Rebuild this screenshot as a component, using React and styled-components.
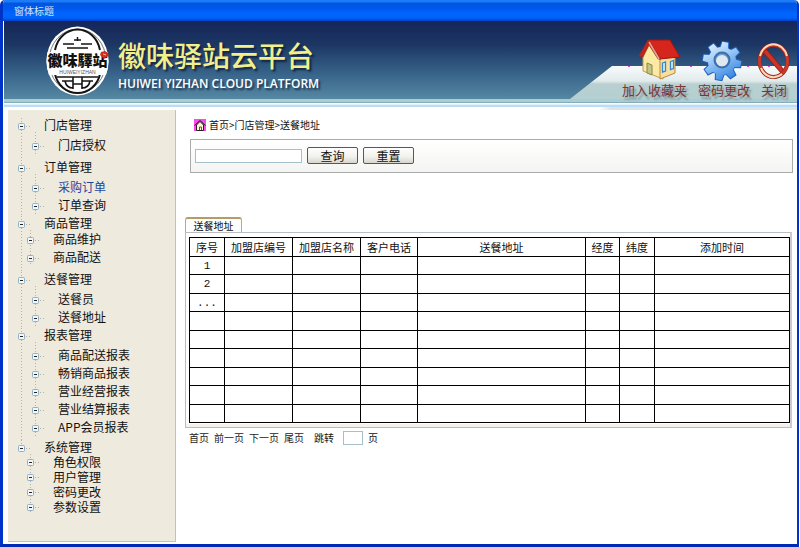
import React from "react";
import styled, { createGlobalStyle, css } from "styled-components";

const GlobalStyle = createGlobalStyle`
  *, *::before, *::after { box-sizing: border-box; }
  body {
    margin: 0;
    background: #fff;
    color: #111;
    font-family: "Noto Sans CJK SC", sans-serif;
    font-size: 12px;
  }
  button, input { font-family: inherit; margin: 0; padding: 0; }
  ul { list-style: none; margin: 0; padding: 0; }
`;

const Window = styled.div`
  display: flex;
  flex-direction: column;
  min-height: 100vh;
  margin-right: 1px;
  border: solid #0034c8;
  border-width: 0 2px 3px 3px;
  border-bottom-color: #0029b8;
  border-radius: 5px 5px 0 0;
  overflow: hidden;
`;

const TitleBar = styled.div`
  height: 21px;
  margin: 0 -3px;
  padding-left: 14px;
  line-height: 22px;
  font-size: 10px;
  color: #d6e2f0;
  background: linear-gradient(#1c7cf8 0 2px, #0054e0 3px, #0058ec 8px, #0066ff 14px, #0062fa 18px, #0040c8 21px);
`;

const Header = styled.header`
  display: flex;
  justify-content: space-between;
  height: 78px;
  margin-left: 1px;
  background: linear-gradient(#15265a, #1c3663 30%, #38648a 68%, #5588a2);
`;

const Brand = styled.div`
  display: flex;
  align-items: flex-start;
  gap: 9px;
  padding: 5px 0 0 42px;
`;

const BrandText = styled.div`
  padding-top: 13px;
  white-space: nowrap;
`;

const BrandName = styled.h1`
  margin: 0;
  font-size: 28px;
  line-height: 32px;
  font-weight: 500;
  color: #f3ef8b;
  text-shadow: 2px 2px 2px #14233f;
`;

const BrandLatin = styled.p`
  margin: 0;
  padding-top: 5px;
  font: 600 12px/16px "Open Sans", "Noto Sans", sans-serif;
  color: #fff;
  text-shadow: 2px 2px 2px #1c2f4a;
`;

const QuickNav = styled.nav`
  position: relative;
  display: flex;
  align-items: flex-end;
  gap: 11px;
  padding: 0 10px 0 52px;
  &::before {
    content: "";
    position: absolute;
    inset: 45px 0 0 0;
    background: linear-gradient(#f8fbfb, #e2ebec 45%, #b9cfd1 55%, #b4d0d2);
    clip-path: polygon(42px 0, 100% 0, 100% 100%, 0 100%);
  }
`;

const QuickButton = styled.button`
  position: relative;
  display: flex;
  flex-direction: column;
  align-items: center;
  border: 0;
  background: none;
  font-size: 13px;
  line-height: 18px;
  color: #7c3434;
  text-shadow: 2px 3px 2px #7c8a8e;
  svg { display: block; overflow: visible; }
`;

const HeaderEdge = styled.div`
  flex: none;
  height: 11px;
  margin-left: 1px;
  background:
    linear-gradient(90deg, #fff, #dde5e9 12px) right 8px / 198px 3px no-repeat,
    linear-gradient(#a9cdd3 0 3px, #85adb7 3px 4px, #fff 4px 5px, #e5f1f9 5px 6px, #b8dcfa 6px 8px, #fff 8px);
`;

const Body = styled.div`
  display: flex;
  flex: 1;
  align-items: stretch;
  gap: 9px;
  padding: 0 4px 2px 5px;
`;

const Sidebar = styled.nav`
  flex: none;
  width: 168px;
  padding: 8px 0 16px 10px;
  background: #eeeade;
  border: solid #c5c2b4;
  border-width: 0 1px 1px 0;
`;

const dots = (x) => css`
  background: repeating-linear-gradient(#b5b2a8 0 1px, transparent 1px 3px) ${x}px 0 / 1px 100% no-repeat;
`;

const Group = styled.li`
  padding-bottom: ${(p) => p.$after}px;
  ${dots(3)}
  &:last-child { background-size: 1px 7px; }
`;

const TreeButton = styled.button`
  display: flex;
  align-items: center;
  height: ${(p) => p.$height}px;
  border: 0;
  background: none;
  font-size: 12px;
  line-height: 14px;
  white-space: nowrap;
  color: ${(p) => (p.$active ? "#1a479c" : "#111")};
  svg { margin: 2px 14px 0 0; }
`;

const Children = styled.ul`
  margin-left: ${(p) => (p.$compact ? 9 : 14)}px;
  padding-top: ${(p) => (p.$compact ? 0 : 4)}px;
  ${dots(3)}
`;

const Main = styled.main`
  flex: 1;
  min-width: 0;
`;

const Breadcrumb = styled.div`
  display: flex;
  align-items: center;
  gap: 3px;
  height: 29px;
  padding-left: 9px;
  font-size: 10px;
`;

const SearchBar = styled.form`
  display: flex;
  align-items: flex-start;
  gap: 5px;
  height: 34px;
  margin-left: 5px;
  padding: 7px 4px;
  border: 1px solid #a9acab;
  background: linear-gradient(#fff, #f4f4f2);
`;

const TextBox = styled.input`
  width: ${(p) => p.$width}px;
  height: 14px;
  border: 1px solid #a5c0cc;
  background: #fff;
  font-size: 10px;
`;

const SearchBox = styled(TextBox)`
  margin: 2px 0 0;
`;

const PushButton = styled.button`
  width: 51px;
  height: 17px;
  border: 1px solid #3c607c;
  border-radius: 2px;
  background: linear-gradient(#fff, #f0f0ec 60%, #d8d5cd);
  font-size: 12px;
  line-height: 13px;
  color: #111;
`;

const TabButton = styled.button`
  display: block;
  width: 57px;
  height: 15px;
  margin-top: 44px;
  border: solid #a4aeb2;
  border-width: 2px 1px 0;
  border-top-color: #b59b66;
  border-radius: 3px 3px 0 0;
  background: #fdfdfb;
  font-size: 10px;
  line-height: 12px;
  color: #111;
`;

const Panel = styled.section`
  margin-right: 1px;
  padding: 4px 0 4px 3px;
  border: 1px solid #b8bdc2;
  border-right: 2px solid #c9cbd1;
  background: #fff;
  box-shadow: inset 0 -3px 0 #f5f1ec;
`;

const Table = styled.table`
  width: 100%;
  height: 186px;
  table-layout: fixed;
  border-collapse: collapse;
  background: #fff;
  font-size: 11px;
  line-height: 14px;
  text-align: center;
  th, td {
    padding: 0;
    border: 1px solid #000;
    font-weight: normal;
    white-space: nowrap;
  }
  th { height: 19px; }
  td { height: 18px; font-family: "Liberation Mono", monospace; }
`;

const Col = styled.col`
  width: ${(p) => p.$width}%;
`;

const Pager = styled.nav`
  display: flex;
  align-items: center;
  gap: 5px;
  padding: 3px 0 0 4px;
  font-size: 10px;
  line-height: 14px;
`;

const PageLink = styled.a`
  color: #222;
  text-decoration: none;
`;

const JumpLabel = styled.label`
  display: flex;
  align-items: center;
  gap: 9px;
  margin-left: 5px;
`;

function NodeBox() {
  return (
    <svg width="12" height="7" viewBox="0 0 12 7" overflow="visible" aria-hidden="true">
      <rect x="0.5" y="0.5" width="6" height="6" rx="1" fill="#f3f6f6" stroke="#8eb0ca" />
      <path d="M2 3.5h3" stroke="#222" />
      <path d="M8 3.5h1M11 3.5h1" stroke="#b5b2a8" />
    </svg>
  );
}

function Logo() {
  return (
    <svg width="63" height="70" viewBox="0 0 63 70" role="img" aria-label="徽味驛站">
      <defs>
        <clipPath id="seal">
          <ellipse cx="31.5" cy="35" rx="31" ry="34.5" />
        </clipPath>
      </defs>
      <ellipse cx="31.5" cy="35" rx="31" ry="34.5" fill="#fff" />
      <ellipse cx="31.5" cy="35" rx="28.5" ry="32" fill="none" stroke="#777" strokeWidth="1" />
      <g fill="none" stroke="#151515">
        <path d="M9 24A23 26 0 0 1 54 24M9 48A23 24 0 0 0 54 48" strokeWidth="2" />
        <path d="M31.5 11v4M28 14h7M17 18h11M35 18h11M21 22h21" strokeWidth="1.5" />
        <path d="M11 51h41M16 55h11v4M47 55H36v4M27 51v12M36 51v12M27 58h9M19 55c1 5 4 7 8 7M44 55c-1 5-4 7-8 7" strokeWidth="1.6" />
      </g>
      <path d="M0 26h63v23H0z" fill="#fff" clipPath="url(#seal)" />
      <text x="31.5" y="40" textAnchor="middle" fontFamily="Noto Sans CJK TC, sans-serif" fontWeight="900" fontSize="15" fill="#111">徽味驛站</text>
      <text x="31.5" y="48" textAnchor="middle" fontFamily="Liberation Sans, sans-serif" fontSize="5" fill="#555">HUIWEIYIZHAN</text>
      <path d="M55 26l4-1 3 2 1 3-3 1-1 2-3-2-2-2z" fill="#d42b1e" />
      <path d="M57 28l3 1" stroke="#f7b0a0" />
    </svg>
  );
}

function HouseIcon() {
  return (
    <svg width="65" height="42" viewBox="0 0 65 42" aria-hidden="true">
      <path d="M6 27.500h2M68 27.500h2" stroke="#f03cf0" />
      <path d="M21 17l7-13 13 16v20l-20-8z" fill="#fbe9a4" stroke="#c49c50" />
      <path d="M38 20l15-3v17l-15 6z" fill="#f8e09a" stroke="#b88845" />
      <path d="M26 1h22l10 17-21 2z" fill="#d6251c" stroke="#9c1712" />
      <path d="M26 1L17 17l4 1 6-12 9 14h3z" fill="#c92018" stroke="#8b3229" strokeWidth=".7" />
      <path d="M27 3l10 17" stroke="#e9a590" strokeWidth="1.500" />
      <path d="M25 24l5 2v10l-5-2z" fill="#b8ca86" stroke="#98804b" />
      <path d="M40.500 24l3-1v9l-3 1zM48.500 22.500l3-1v8l-3 1z" fill="#d8f0ff" stroke="#3586cf" strokeWidth="1.300" />
    </svg>
  );
}

const teeth = [0, 45, 90, 135, 180, 225, 270, 315];

function GearIcon() {
  return (
    <svg width="52" height="42" viewBox="0 0 52 42" aria-hidden="true">
      <defs>
        <linearGradient id="gear" x1="0" y1="0" x2="0.6" y2="1">
          <stop offset="0.1" stopColor="#f4faff" />
          <stop offset="0.5" stopColor="#9ccaf5" />
          <stop offset="1" stopColor="#2f80e0" />
        </linearGradient>
        <mask id="gear-shape">
          <circle cx="24" cy="22" r="14" fill="#fff" />
          {teeth.map((a) => (
            <path key={a} d="M20 10l1-7h6l1 7z" fill="#fff" transform={`rotate(${a + 10} 24 22)`} />
          ))}
          <circle cx="24" cy="21" r="7" fill="#000" />
        </mask>
      </defs>
      <g fill="none" stroke="#1f5fc0" strokeWidth="2">
        {teeth.map((a) => (
          <path key={a} d="M20 10l1-7h6l1 7z" transform={`rotate(${a + 10} 24 22)`} />
        ))}
        <circle cx="24" cy="22" r="13.500" />
      </g>
      <circle cx="24" cy="21" r="8" fill="#6f9cc8" />
      <circle cx="24" cy="22" r="6" fill="#dfe9ef" />
      <rect width="48" height="44" fill="url(#gear)" mask="url(#gear-shape)" />
      <circle cx="24" cy="21" r="7.500" fill="none" stroke="#3c6fae" strokeWidth="2" />
      <path d="M49 27.500h2" stroke="#f03cf0" />
    </svg>
  );
}

function ForbiddenIcon() {
  return (
    <svg width="26" height="42" viewBox="0 0 26 42" aria-hidden="true">
      <path d="M3 11l19 22" stroke="#8e2018" strokeWidth="5" />
      <path d="M3 11l19 22" stroke="#d03426" strokeWidth="3.500" />
      <ellipse cx="12.500" cy="22" rx="14" ry="16" fill="none" stroke="#8e2018" strokeWidth="4" />
      <ellipse cx="12.500" cy="22" rx="14" ry="16" fill="none" stroke="#c8392c" strokeWidth="3" />
      <path d="M-1 17a14 16 0 0 1 27 0M0 29a14 16 0 0 0 21 6" fill="none" stroke="#ffd9b8" strokeWidth="2" />
      <path d="M7 27.500h2" stroke="#f03cf0" />
    </svg>
  );
}

function HomeMark() {
  return (
    <svg width="12" height="12" viewBox="0 0 12 12" aria-hidden="true">
      <path d="M0 0h12v12H0z" fill="#f84af0" />
      <path d="M2.500 6v5.500h7V6L6 2.500z" fill="#fff6cf" stroke="#222" />
      <path d="M.500 6.500L6 1.500l5.500 5" fill="none" stroke="#222" />
      <path d="M5.500 11V8h2v3" fill="none" stroke="#555" />
    </svg>
  );
}

const menu = [
  { name: "门店管理", after: 6, items: ["门店授权"] },
  { name: "订单管理", after: 2, items: ["采购订单", "订单查询"] },
  { name: "商品管理", after: 6, compact: true, items: ["商品维护", "商品配送"] },
  { name: "送餐管理", after: 2, items: ["送餐员", "送餐地址"] },
  { name: "报表管理", after: 4, items: ["商品配送报表", "畅销商品报表", "营业经营报表", "营业结算报表", "APP会员报表"] },
  { name: "系统管理", after: 0, compact: true, rowHeight: 15, items: ["角色权限", "用户管理", "密码更改", "参数设置"] },
];

const columns = [
  { name: "序号", width: 35 },
  { name: "加盟店编号", width: 68 },
  { name: "加盟店名称", width: 68 },
  { name: "客户电话", width: 57 },
  { name: "送餐地址", width: 168 },
  { name: "经度", width: 34 },
  { name: "纬度", width: 35 },
  { name: "添加时间", width: 135 },
];
const totalWidth = columns.reduce((sum, c) => sum + c.width, 0);

const rows = ["1", "2", "...", "", "", "", "", "", ""];

const quickActions = [
  ["加入收藏夹", HouseIcon],
  ["密码更改", GearIcon],
  ["关闭", ForbiddenIcon],
];

export default function App() {
  return (
    <>
      <GlobalStyle />
      <Window lang="zh-CN">
        <TitleBar>窗体标题</TitleBar>
        <Header>
          <Brand>
            <Logo />
            <BrandText>
              <BrandName>徽味驿站云平台</BrandName>
              <BrandLatin>HUIWEI YIZHAN CLOUD PLATFORM</BrandLatin>
            </BrandText>
          </Brand>
          <QuickNav>
            {quickActions.map(([name, Icon]) => (
              <QuickButton key={name} type="button">
                <Icon />
                {name}
              </QuickButton>
            ))}
          </QuickNav>
        </Header>
        <HeaderEdge />
        <Body>
          <Sidebar>
            <ul>
              {menu.map((group) => (
                <Group key={group.name} $after={group.after}>
                  <TreeButton type="button" $height={14}>
                    <NodeBox />
                    {group.name}
                  </TreeButton>
                  <Children $compact={group.compact}>
                    {group.items.map((item) => (
                      <li key={item}>
                        <TreeButton type="button" $height={group.rowHeight || 18} $active={item === "采购订单"}>
                          <NodeBox />
                          {item}
                        </TreeButton>
                      </li>
                    ))}
                  </Children>
                </Group>
              ))}
            </ul>
          </Sidebar>
          <Main>
            <Breadcrumb>
              <HomeMark />
              <span>首页&gt;门店管理&gt;送餐地址</span>
            </Breadcrumb>
            <SearchBar onSubmit={(e) => e.preventDefault()}>
              <SearchBox $width={107} aria-label="查询" />
              <PushButton type="submit">查询</PushButton>
              <PushButton type="reset">重置</PushButton>
            </SearchBar>
            <TabButton type="button">送餐地址</TabButton>
            <Panel>
              <Table>
                <colgroup>
                  {columns.map((c) => (
                    <Col key={c.name} $width={(c.width / totalWidth) * 100} />
                  ))}
                </colgroup>
                <thead>
                  <tr>
                    {columns.map((c) => (
                      <th key={c.name} scope="col">{c.name}</th>
                    ))}
                  </tr>
                </thead>
                <tbody>
                  {rows.map((label, r) => (
                    <tr key={r}>
                      {columns.map((c, i) => (
                        <td key={c.name}>{i === 0 ? label : ""}</td>
                      ))}
                    </tr>
                  ))}
                </tbody>
              </Table>
            </Panel>
            <Pager>
              <PageLink href="#first">首页</PageLink>
              <PageLink href="#prev">前一页</PageLink>
              <PageLink href="#next">下一页</PageLink>
              <PageLink href="#last">尾页</PageLink>
              <JumpLabel>
                跳转
                <TextBox $width={20} />
              </JumpLabel>
              <span>页</span>
            </Pager>
          </Main>
        </Body>
      </Window>
    </>
  );
}
